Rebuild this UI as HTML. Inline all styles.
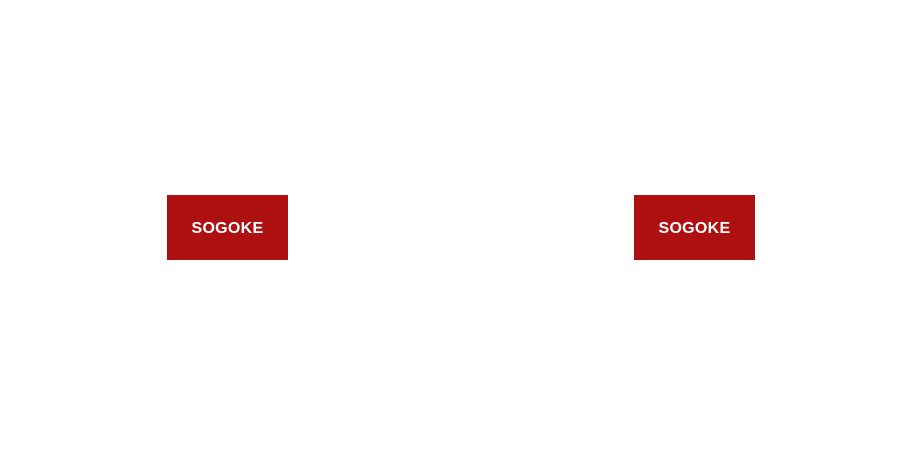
<!DOCTYPE html>
<html><head><style>
html,body{margin:0;padding:0;width:922px;height:455px;background:#fff;overflow:hidden}
.b{position:absolute;top:195px;width:121px;height:65px;background:#ae0f11;color:#fff;
font-family:"Liberation Sans",sans-serif;font-weight:bold;font-size:16px;
display:flex;align-items:center;justify-content:center;letter-spacing:0.3px;padding-top:2px;box-sizing:border-box}
</style></head><body>
<div class="b" style="left:167px">SOGOKE</div>
<div class="b" style="left:634px">SOGOKE</div>
</body></html>
